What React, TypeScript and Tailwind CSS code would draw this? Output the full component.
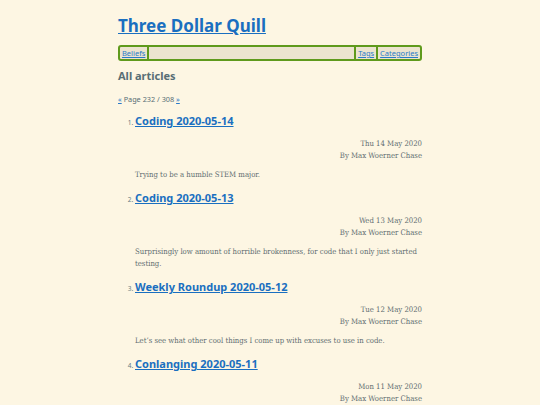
import React from 'react';

const articles = [
	{
		title: 'Coding 2020-05-14',
		date: 'Thu 14 May 2020',
		summary: 'Trying to be a humble STEM major.',
	},
	{
		title: 'Coding 2020-05-13',
		date: 'Wed 13 May 2020',
		summary: 'Surprisingly low amount of horrible brokenness, for code that I only just started testing.',
	},
	{
		title: 'Weekly Roundup 2020-05-12',
		date: 'Tue 12 May 2020',
		summary: 'Let\u2019s see what other cool things I come up with excuses to use in code.',
	},
	{
		title: 'Conlanging 2020-05-11',
		date: 'Mon 11 May 2020',
		summary: 'Thinking about the grammar a bit more.',
	},
];

const heading = "font-['Noto_Sans',sans-serif]";
const body = "font-['DejaVu_Serif',serif] font-stretch-condensed";

export default function App() {
	return (
		<div className="min-h-screen bg-[#fdf6e3] text-[#586e75]">
			<div className="mx-auto w-[304px] pt-[14px]">
				<h1 className={`${heading} text-[17px] leading-[24px] font-bold`}>
					<a href="#" className="text-[#1a6fc0] underline">
						Three Dollar Quill
					</a>
				</h1>

				<nav
					className={`${heading} mt-[7px] flex h-[16px] items-stretch rounded-[3px] border-2 border-[#5f9a1c] bg-[#ece4cf] text-[7.5px] leading-[12px]`}
				>
					<a href="#" className="border-r-2 border-[#5f9a1c] px-[2px] text-[#2a7ac9] underline">
						Beliefs
					</a>
					<div className="grow" />
					<a href="#" className="border-l-2 border-[#5f9a1c] px-[2px] text-[#2a7ac9] underline">
						Tags
					</a>
					<a href="#" className="border-l-2 border-[#5f9a1c] px-[2px] text-[#2a7ac9] underline">
						Categories
					</a>
				</nav>

				<h2 className={`${heading} mt-[7px] text-[11px] leading-[16px] font-bold text-[#586e75]`}>
					All articles
				</h2>

				<p className={`${heading} mt-[9px] text-[7.3px] leading-[12px]`}>
					<a href="#" className="text-[#2a7ac9] underline">
						«
					</a>{' '}
					Page 232 / 308{' '}
					<a href="#" className="text-[#2a7ac9] underline">
						»
					</a>
				</p>

				<ol className="mt-[6px] list-decimal pl-[17px] text-[6.5px] marker:text-[#657b83]">
					{articles.map((a) => (
						<li key={a.title} className={`${heading} pb-[7px]`}>
							<h3 className="text-[11px] leading-[20px] font-bold">
								<a href="#" className="text-[#1a6fc0] underline">
									{a.title}
								</a>
							</h3>
							<div className={`${body} mt-[7px] text-right text-[7.7px] leading-[12px] text-[#626e72]`}>
								<p>{a.date}</p>
								<p>By Max Woerner Chase</p>
							</div>
							<p className={`${body} mt-[7px] text-[7.7px] leading-[12px] text-[#626e72]`}>{a.summary}</p>
						</li>
					))}
				</ol>
			</div>
		</div>
	);
}
